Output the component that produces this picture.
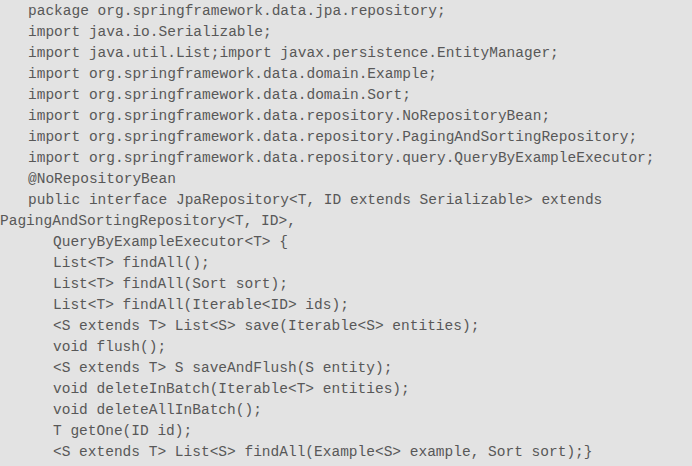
const lines: [number, string][] = [
  [28, "package org.springframework.data.jpa.repository;"],
  [28, "import java.io.Serializable;"],
  [28, "import java.util.List;import javax.persistence.EntityManager;"],
  [28, "import org.springframework.data.domain.Example;"],
  [28, "import org.springframework.data.domain.Sort;"],
  [28, "import org.springframework.data.repository.NoRepositoryBean;"],
  [28, "import org.springframework.data.repository.PagingAndSortingRepository;"],
  [28, "import org.springframework.data.repository.query.QueryByExampleExecutor;"],
  [28, "@NoRepositoryBean"],
  [28, "public interface JpaRepository<T, ID extends Serializable> extends"],
  [0, "PagingAndSortingRepository<T, ID>,"],
  [53, "QueryByExampleExecutor<T> {"],
  [53, "List<T> findAll();"],
  [53, "List<T> findAll(Sort sort);"],
  [53, "List<T> findAll(Iterable<ID> ids);"],
  [53, "<S extends T> List<S> save(Iterable<S> entities);"],
  [53, "void flush();"],
  [53, "<S extends T> S saveAndFlush(S entity);"],
  [53, "void deleteInBatch(Iterable<T> entities);"],
  [53, "void deleteAllInBatch();"],
  [53, "T getOne(ID id);"],
  [53, "<S extends T> List<S> findAll(Example<S> example, Sort sort);}"],
];

export default function App() {
  return (
    <div className="w-[692px] h-[466px] bg-[#e3e3e3] overflow-hidden">
      <pre className="font-['Liberation_Mono',monospace] text-[14.5px] leading-[21px] text-[#585858] pt-[1px]">
        {lines.map(([indent, text], i) => (
          <div key={i} style={{ paddingLeft: indent }}>
            {text}
          </div>
        ))}
      </pre>
    </div>
  );
}
